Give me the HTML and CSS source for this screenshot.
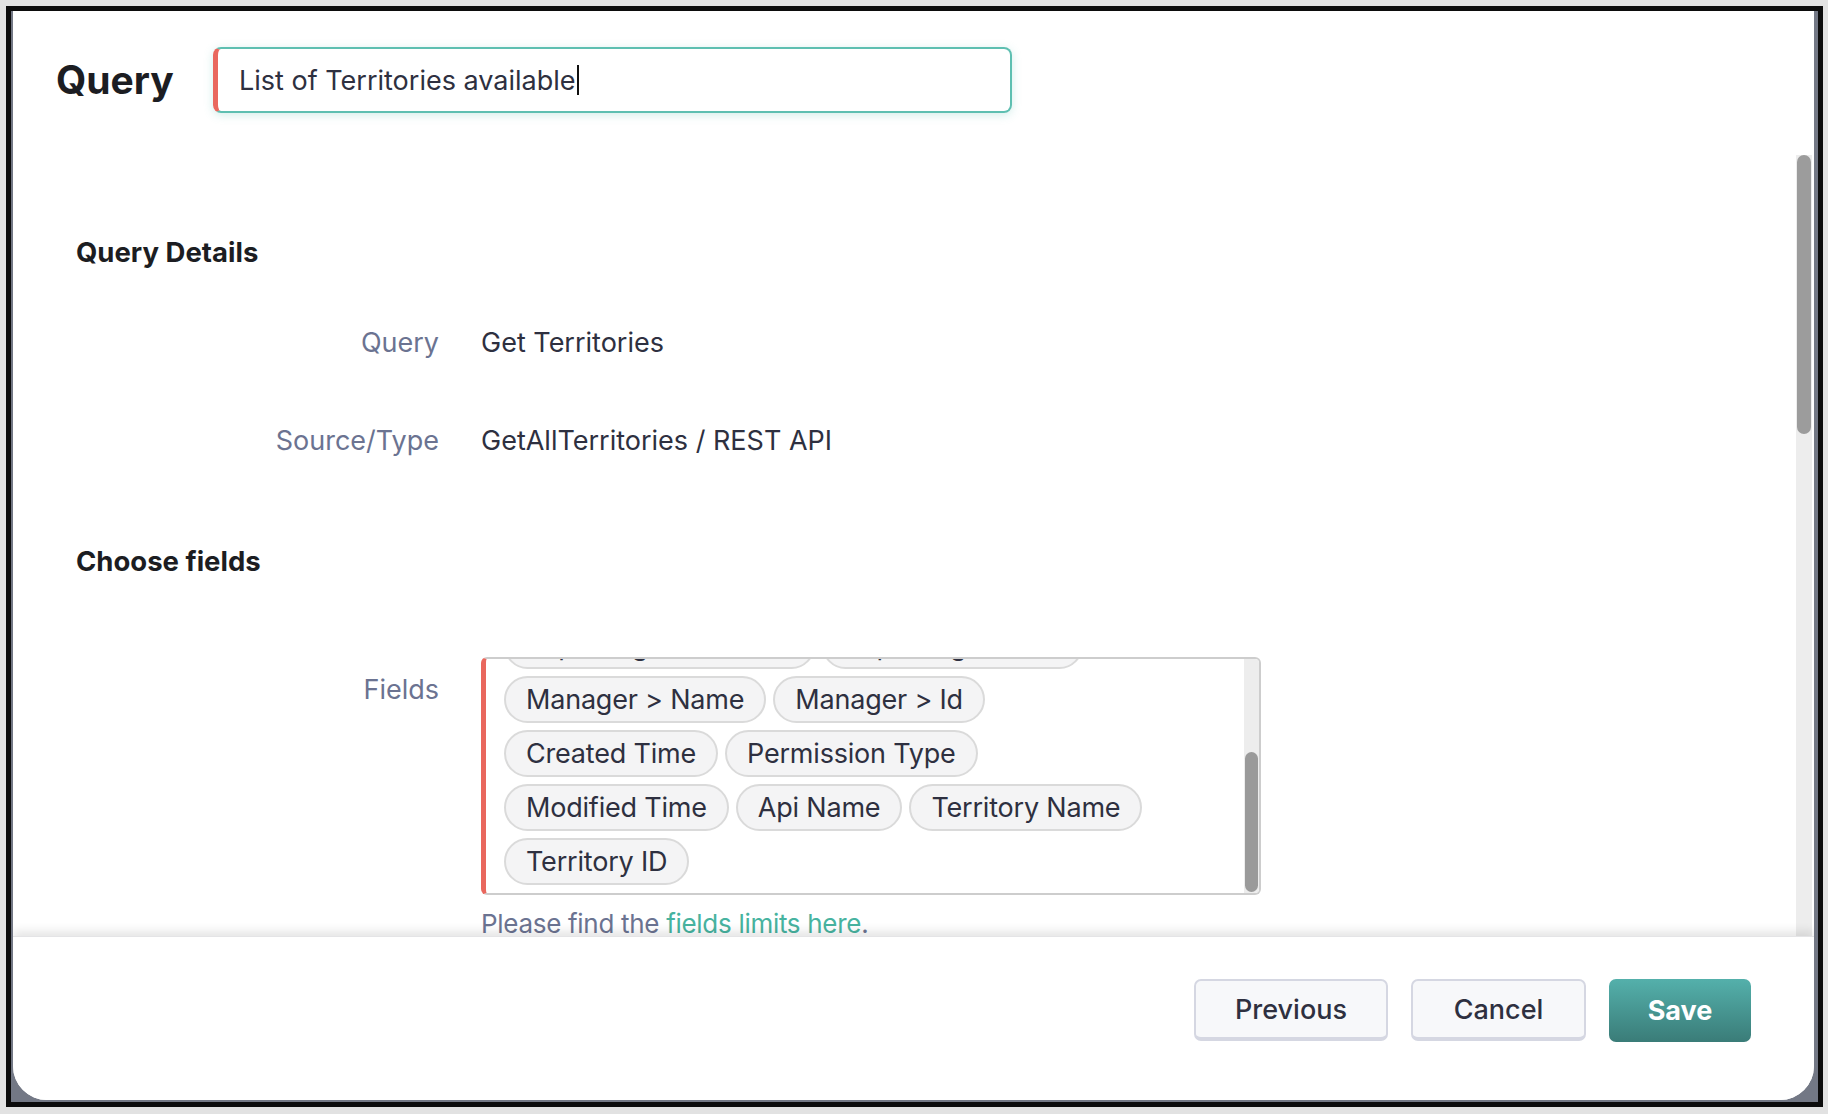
FILE: index.html
```html
<!DOCTYPE html>
<html lang="en">
<head>
<meta charset="utf-8">
<title>Query</title>
<link rel="stylesheet" href="styles.css">
</head>
<body>
<div class="frame">
  <div class="modal">
    <header class="head">
      <h1 class="title">Query</h1>
      <div class="name-input"><span class="name-text">List of Territories available</span><span class="caret"></span></div>
    </header>
    <div class="body">
      <div class="content">
        <h2 class="section sec-details">Query Details</h2>
        <div class="row row-query">
          <div class="label">Query</div>
          <div class="value">Get Territories</div>
        </div>
        <div class="row row-source">
          <div class="label">Source/Type</div>
          <div class="value">GetAllTerritories / REST API</div>
        </div>
        <h2 class="section sec-fields">Choose fields</h2>
        <div class="row row-fields">
          <div class="label label-fields">Fields</div>
          <div class="field-col">
            <div class="chip-box">
              <div class="chip-area">
                <div class="chip-rows">
                  <div class="chip-row"><span class="chip">Reporting To &gt; Name</span><span class="chip">Reporting To &gt; Id</span></div>
                  <div class="chip-row"><span class="chip">Manager &gt; Name</span><span class="chip">Manager &gt; Id</span></div>
                  <div class="chip-row"><span class="chip">Created Time</span><span class="chip">Permission Type</span></div>
                  <div class="chip-row"><span class="chip">Modified Time</span><span class="chip">Api Name</span><span class="chip">Territory Name</span></div>
                  <div class="chip-row"><span class="chip">Territory ID</span></div>
                </div>
              </div>
              <div class="box-scroll"><div class="box-thumb"></div></div>
            </div>
            <p class="note">Please find the <a class="link" href="#">fields limits here</a>.</p>
          </div>
        </div>
      </div>
      <div class="vscroll"><div class="vthumb"></div></div>
    </div>
    <footer class="foot">
      <button class="btn btn-light btn-prev">Previous</button>
      <button class="btn btn-light btn-cancel">Cancel</button>
      <button class="btn btn-save">Save</button>
    </footer>
  </div>
</div>
</body>
</html>
```
FILE: styles.css
```css
* { box-sizing: border-box; }
html, body { margin: 0; padding: 0; }
body {
  width: 1828px;
  height: 1114px;
  background: #e2e2e2;
  font-family: Inter, "Liberation Sans", sans-serif;
  color: #2e3040;
  overflow: hidden;
}
.frame {
  margin: 6px 5px 0 6px;
  height: 1101px;
  border: 5px solid #0c0c0c;
  background: #737885;
  padding: 0 4px 2px 2px;
  display: flex;
}
.modal {
  flex: 1;
  background: #fff;
  border-radius: 0 0 34px 34px;
  display: flex;
  flex-direction: column;
  overflow: hidden;
}
.head {
  height: 144px;
  flex: none;
  display: flex;
  align-items: flex-start;
  padding: 36px 0 0 43px;
}
.title {
  margin: 0;
  width: 157px;
  font-size: 39px;
  font-weight: 700;
  color: #1c1d22;
  line-height: 66px;
}
.name-input {
  width: 799px;
  height: 66px;
  border: 2px solid #5ebfb1;
  border-left: 5px solid #e9675d;
  border-radius: 8px;
  box-shadow: 0 2px 10px rgba(94, 191, 177, 0.28);
  display: flex;
  align-items: center;
  padding-left: 21px;
}
.name-text {
  font-size: 27px;
  color: #2e3040;
}
.caret {
  display: inline-block;
  width: 0;
  height: 30px;
  border-left: 2px solid #111;
  margin-left: 1px;
}
.body {
  height: 781px;
  flex: none;
  display: flex;
  overflow: hidden;
}
.content {
  flex: 1;
  padding-left: 63px;
  overflow: hidden;
}
.vscroll {
  width: 16px;
  margin-right: 2px;
  background: #ededed;
  flex: none;
}
.vthumb {
  height: 279px;
  background: #9c9c9c;
  border-radius: 8px;
  margin: 0 1px;
}
.section {
  margin: 0;
  font-size: 27.5px;
  font-weight: 700;
  color: #1c1d22;
  line-height: 34px;
}
.sec-details { margin-top: 80px; }
.sec-fields { margin-top: 86px; }
.row {
  display: grid;
  grid-template-columns: 363px 780px;
  column-gap: 42px;
  line-height: 34px;
  font-size: 27px;
}
.row-query { margin-top: 57px; }
.row-source { margin-top: 64px; }
.row-fields { margin-top: 79px; }
.label {
  text-align: right;
  color: #6b7391;
}
.label-fields { padding-top: 16px; }
.value { color: #2e3040; }
.chip-box {
  height: 238px;
  border: 2px solid #cdcdcd;
  border-left: 5px solid #e9675d;
  border-radius: 6px;
  display: flex;
  overflow: hidden;
}
.chip-area {
  flex: 1;
  overflow: hidden;
  padding-left: 18px;
}
.chip-rows {
  margin-top: -37px;
  display: flex;
  flex-direction: column;
  gap: 7px;
}
.chip-row {
  display: flex;
  gap: 7px;
}
.chip {
  height: 47px;
  display: inline-flex;
  align-items: center;
  padding: 0 20px;
  border: 2px solid #dadada;
  background: #f4f4f5;
  border-radius: 24px;
  font-size: 27px;
  letter-spacing: -0.2px;
  color: #2e3040;
  white-space: nowrap;
}
.box-scroll {
  width: 15px;
  background: #ededed;
  flex: none;
  padding-top: 93px;
}
.box-thumb {
  height: 140px;
  background: #9a9a9a;
  border-radius: 8px;
  margin: 0 1px;
}
.note {
  margin: 12px 0 0;
  color: #6b7391;
  line-height: 34px;
  font-size: 26px;
  letter-spacing: -0.3px;
}
.link {
  color: #47b3a0;
  text-decoration: none;
}
.foot {
  position: relative;
  z-index: 1;
  flex: 1;
  background: #fff;
  border-top: 1px solid #e4e4e6;
  box-shadow: 0 -5px 9px rgba(0, 0, 0, 0.10);
  display: flex;
  justify-content: flex-end;
  align-items: flex-start;
  padding: 42px 63px 0 0;
  gap: 23px;
}
.btn {
  height: 62px;
  font-family: Inter, "Liberation Sans", sans-serif;
  font-size: 27px;
  border-radius: 7px;
  padding: 0;
}
.btn-light {
  background: #f7f8fa;
  border: 2px solid #d5d7e2;
  border-bottom-width: 4px;
  color: #2e3040;
  font-weight: 500;
}
.btn-prev { width: 194px; }
.btn-cancel { width: 175px; }
.btn-save {
  width: 142px;
  height: 63px;
  border: none;
  color: #fff;
  font-weight: 700;
  background: linear-gradient(#54b0ab, #3a7c78);
}
```
